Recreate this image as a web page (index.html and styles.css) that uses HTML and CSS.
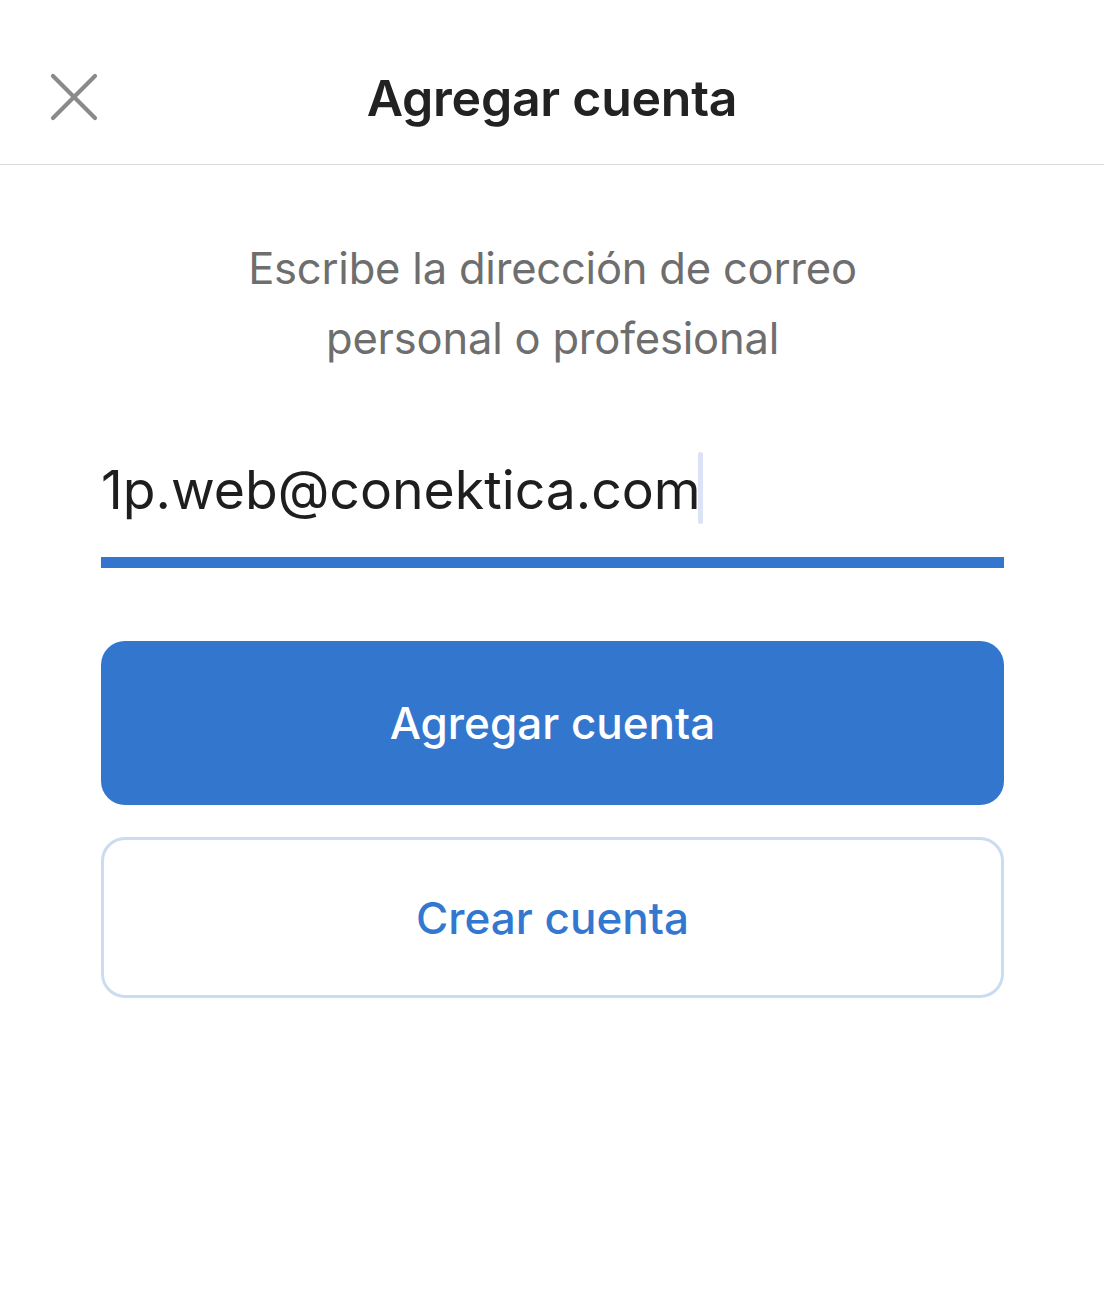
FILE: index.html
```html
<!DOCTYPE html>
<html lang="es">
<head>
<meta charset="utf-8">
<link rel="stylesheet" href="styles.css">
</head>
<body>
<header class="topbar">
  <button class="close" aria-label="Cerrar">
    <svg width="48" height="48" viewBox="0 0 48 48"><path d="M3 3 L45 45 M45 3 L3 45" stroke="#8a8a8a" stroke-width="4.2" stroke-linecap="round" fill="none"/></svg>
  </button>
  <h1 class="title">Agregar cuenta</h1>
</header>
<main class="content">
  <p class="prompt">Escribe la dirección de correo<br>personal o profesional</p>
  <div class="field">
    <span class="value">1p.web@conektica.com</span><span class="caret"></span>
  </div>
  <div class="underline"></div>
  <button class="btn primary">Agregar cuenta</button>
  <button class="btn secondary">Crear cuenta</button>
</main>
</body>
</html>
```
FILE: styles.css
```css
html, body {
  margin: 0;
  padding: 0;
  background: #ffffff;
  font-family: Inter, "Noto Sans", sans-serif;
}
.topbar {
  height: 165px;
  box-sizing: border-box;
  border-bottom: 1px solid #d9d9d9;
  display: flex;
  align-items: center;
  justify-content: center;
  position: relative;
}
.close {
  position: absolute;
  left: 50px;
  top: 73px;
  width: 48px;
  height: 48px;
  padding: 0;
  border: 0;
  background: none;
  display: block;
}
.close svg { display: block; }
.title {
  margin: 0;
  margin-top: 32px;
  font-size: 50px;
  font-weight: 600;
  color: #222222;
  letter-spacing: -0.25px;
}
.content {
  padding: 0 100px 0 101px;
  display: flex;
  flex-direction: column;
}
.prompt {
  margin: 68px 0 0 0;
  text-align: center;
  font-size: 43.5px;
  line-height: 70px;
  color: #6e6e6e;
  font-weight: 400;
  letter-spacing: -0.2px;
}
.field {
  margin-top: 82px;
  height: 72px;
  display: flex;
  align-items: center;
  padding-left: 0;
}
.value {
  font-size: 53.5px;
  color: #1e1e1e;
  letter-spacing: 0;
  position: relative;
  top: -2px;
}
.caret {
  width: 5px;
  height: 72px;
  background: #dde3f6;
  border-radius: 3px;
  margin-left: -3px;
  position: relative;
  top: -3px;
}
.underline {
  margin-top: 30px;
  height: 11px;
  background: #3476cd;
}
.btn {
  font-family: inherit;
  display: flex;
  align-items: center;
  justify-content: center;
  width: 100%;
  border-radius: 24px;
  font-size: 44px;
  font-weight: 500;
  padding: 0;
}
.primary {
  margin-top: 73px;
  height: 164px;
  background: #3376cd;
  color: #ffffff;
  border: 0;
}
.secondary {
  margin-top: 32px;
  height: 161px;
  background: #ffffff;
  color: #3377d0;
  border: 3px solid #cadcf1;
}
```
